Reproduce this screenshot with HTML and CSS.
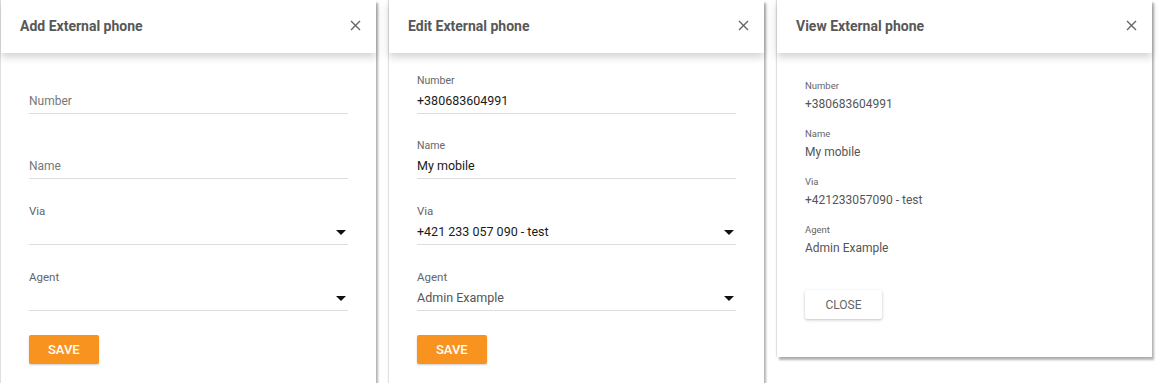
FILE: index.html
```html
<!DOCTYPE html>
<html lang="en">
<head>
  <meta charset="UTF-8">
  <title>External phone</title>
  <link rel="stylesheet" href="styles.css">
</head>
<body>
  <div class="dialogs">

    <!-- Add -->
    <div class="dialog">
      <div class="dialog-header">
        <span class="dialog-title">Add External phone</span>
        <svg class="close-icon" width="11" height="11" viewBox="0 0 11 11"><path d="M1 1L10 10M10 1L1 10" stroke="#666" stroke-width="1.4"/></svg>
      </div>
      <div class="dialog-body">
        <div class="field">
          <div class="field-label"></div>
          <div class="field-value placeholder">Number</div>
        </div>
        <div class="field">
          <div class="field-label"></div>
          <div class="field-value placeholder">Name</div>
        </div>
        <div class="field select">
          <div class="field-label">Via</div>
          <div class="field-value"><span></span><span class="arrow"></span></div>
        </div>
        <div class="field select">
          <div class="field-label">Agent</div>
          <div class="field-value"><span></span><span class="arrow"></span></div>
        </div>
        <button class="btn-save">SAVE</button>
      </div>
    </div>

    <!-- Edit -->
    <div class="dialog">
      <div class="dialog-header">
        <span class="dialog-title">Edit External phone</span>
        <svg class="close-icon" width="11" height="11" viewBox="0 0 11 11"><path d="M1 1L10 10M10 1L1 10" stroke="#666" stroke-width="1.4"/></svg>
      </div>
      <div class="dialog-body">
        <div class="field">
          <div class="field-label">Number</div>
          <div class="field-value">+380683604991</div>
        </div>
        <div class="field">
          <div class="field-label">Name</div>
          <div class="field-value">My mobile</div>
        </div>
        <div class="field select">
          <div class="field-label">Via</div>
          <div class="field-value"><span>+421 233 057 090 - test</span><span class="arrow"></span></div>
        </div>
        <div class="field select">
          <div class="field-label">Agent</div>
          <div class="field-value muted"><span>Admin Example</span><span class="arrow"></span></div>
        </div>
        <button class="btn-save">SAVE</button>
      </div>
    </div>

    <!-- View -->
    <div class="dialog">
      <div class="dialog-header">
        <span class="dialog-title">View External phone</span>
        <svg class="close-icon" width="11" height="11" viewBox="0 0 11 11"><path d="M1 1L10 10M10 1L1 10" stroke="#666" stroke-width="1.4"/></svg>
      </div>
      <div class="dialog-body view">
        <div class="info">
          <div class="info-label">Number</div>
          <div class="info-value">+380683604991</div>
        </div>
        <div class="info">
          <div class="info-label">Name</div>
          <div class="info-value">My mobile</div>
        </div>
        <div class="info">
          <div class="info-label">Via</div>
          <div class="info-value">+421233057090 - test</div>
        </div>
        <div class="info">
          <div class="info-label">Agent</div>
          <div class="info-value">Admin Example</div>
        </div>
        <button class="btn-close">CLOSE</button>
      </div>
    </div>

  </div>
</body>
</html>
```

FILE: styles.css
```css
body {
  margin: 0;
  background: #fff;
  font-family: Roboto, "Liberation Sans", Arial, sans-serif;
}
.dialogs {
  display: flex;
  align-items: flex-start;
  gap: 13px;
  padding-left: 1px;
}
.dialog {
  width: 375px;
  background: #fff;
  box-shadow: 2px 3px 2px rgba(0, 0, 0, 0.3), -1px 0 1px rgba(0, 0, 0, 0.12);
}
.dialog-header {
  position: relative;
  z-index: 1;
  height: 51px;
  padding: 0 15px 2px 19px;
  display: flex;
  align-items: center;
  justify-content: space-between;
  background: #fff;
  box-shadow: 0 4px 8px rgba(0, 0, 0, 0.18);
}
.dialog-title {
  font-size: 14px;
  font-weight: 700;
  color: #585858;
}
.close-icon {
  display: block;
}
.dialog-body {
  padding: 21px 28px 19px;
}
.field {
  border-bottom: 1px solid #ddd;
  margin-bottom: 25px;
}
.field:last-of-type {
  margin-bottom: 24px;
}
.field-label {
  height: 14px;
  font-size: 10.5px;
  line-height: 14px;
  color: #666;
  margin-bottom: 3px;
}
.field.select .field-label {
  height: 15px;
  font-size: 11.5px;
  line-height: 15px;
}
.field-value {
  height: 20px;
  font-size: 12.5px;
  line-height: 20px;
  color: #1a1a1a;
  padding-bottom: 2px;
  display: flex;
  align-items: center;
  justify-content: space-between;
}
.field-value.placeholder {
  font-size: 12px;
  color: #777;
  line-height: 16px;
}
.field-value.muted {
  color: #555;
}
.arrow {
  width: 0;
  height: 0;
  margin-right: 2px;
  border-left: 5px solid transparent;
  border-right: 5px solid transparent;
  border-top: 5px solid #111;
}
.btn-save {
  display: block;
  height: 29px;
  padding: 0 19px;
  border: none;
  border-radius: 2px;
  background: #f7931e;
  color: #fff;
  font-family: inherit;
  font-size: 13px;
  font-weight: 500;
  box-shadow: 0 1px 2px rgba(0, 0, 0, 0.2);
}
.dialog-body.view {
  padding: 27px 28px 38px;
}
.info {
  margin-bottom: 15px;
}
.info-label {
  font-size: 9.5px;
  line-height: 12px;
  color: #666;
  margin-bottom: 3px;
}
.info-value {
  font-size: 12px;
  line-height: 18px;
  color: #555;
}
.btn-close {
  display: block;
  margin-top: 33px;
  height: 29px;
  width: 77px;
  border: none;
  border-radius: 2px;
  background: #fff;
  color: #666;
  font-family: inherit;
  font-size: 12px;
  box-shadow: 0 1px 3px rgba(0, 0, 0, 0.25);
}
```
